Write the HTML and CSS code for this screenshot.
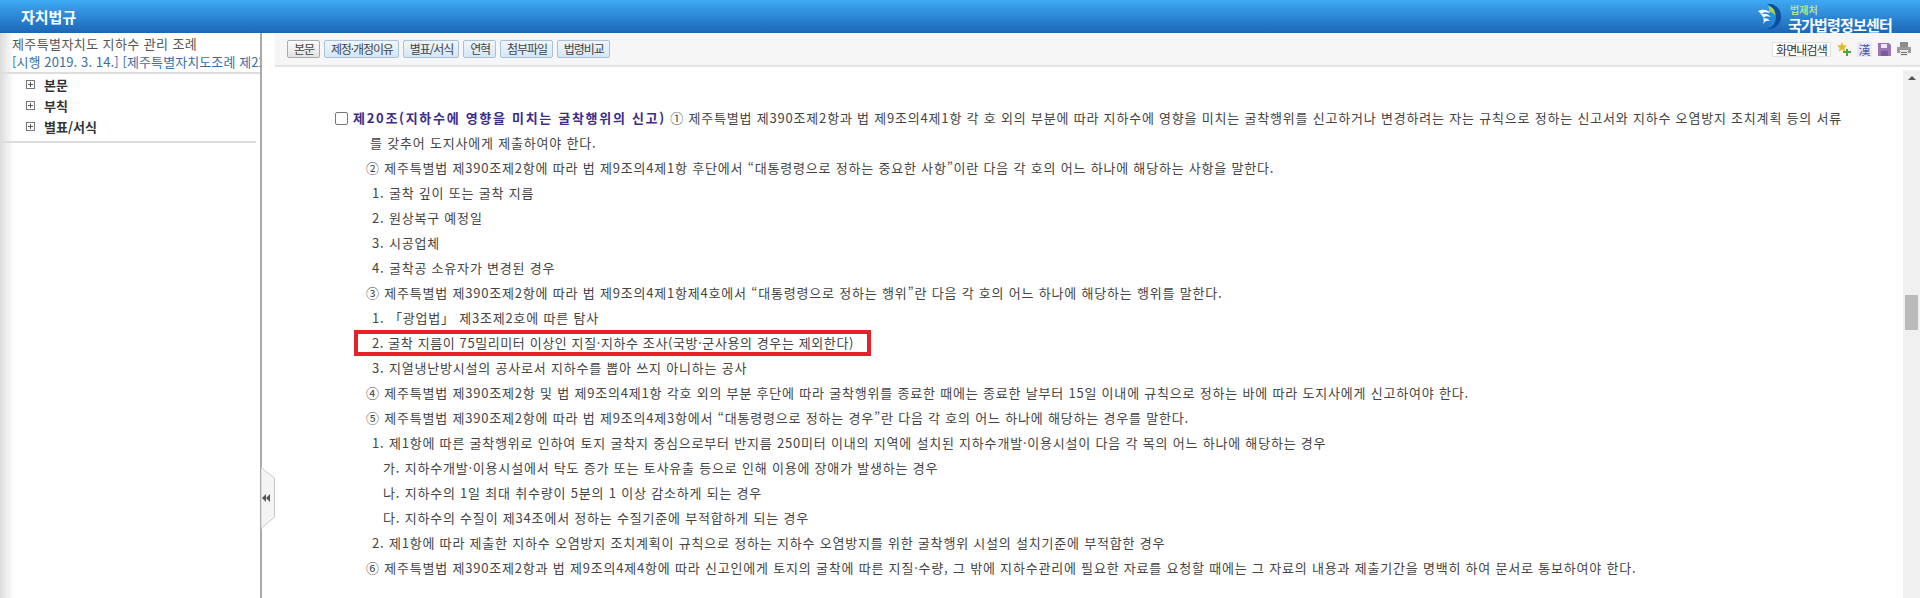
FILE: index.html
```html
<!DOCTYPE html>
<html lang="ko">
<head>
    <meta charset="UTF-8">
    <title>자치법규</title>
    <link rel="stylesheet" href="styles.css">
</head>
<body>
<div class="app">
    <header class="top">
        <h1 class="top-title">자치법규</h1>
        <div class="logo">
            <svg class="logo-mark" width="23" height="26" viewBox="0 0 23 26">
                <path d="M9 0c8-1 14 5 14 12.500S17 26 9 25c6-2 9-6 9-11.500S15 3 9 0z" fill="#0d4f9c"/>
                <path d="M10 2c5 1 8 5 7 10-1-3-4-4-7-4 2-1 2-3 0-6z" fill="#a5d651"/>
                <path d="M11 8c3 0 6 2 6 5 0 5-3 9-7 11 3-3 4-6 3-9-1-3-1-5-2-7z" fill="#1f8fe0"/>
                <path d="M0 7c4-2 9-2 12 2-4-1-7-1-9 1 3-1 8 0 10 3-3-1-6-1-8 1 3 0 6 1 7 3-3-1-5 0-7 3 2-4 0-9-5-13z" fill="#fff"/>
            </svg>
            <div class="logo-text">
                <span class="logo-sub">법제처</span>
                <span class="logo-name">국가법령정보센터</span>
            </div>
        </div>
    </header>

    <div class="wrap">
        <aside class="side">
            <div class="side-head">
                <div class="side-law">제주특별자치도 지하수 관리 조례</div>
                <div class="side-date">[시행 2019. 3. 14.] [제주특별자치도조례 제2200호]</div>
            </div>
            <ul class="tree">
                <li><span class="plus"></span>본문</li>
                <li><span class="plus"></span>부칙</li>
                <li><span class="plus"></span>별표/서식</li>
            </ul>
        </aside>
        <div class="fold">
            <svg width="14" height="62" viewBox="0 0 14 62">
                <path d="M0 0.5L13.500 11V50L0 61.500z" fill="#f4f4f4" stroke="#c8c8c8"/>
                <path d="M1 31L5 27V35zM5 31L9 27V35z" fill="#555"/>
            </svg>
        </div>

        <main class="main">
            <div class="toolbar">
                <div class="btns">
                    <button class="btn btn-on">본문</button>
                    <button class="btn">제정·개정이유</button>
                    <button class="btn">별표/서식</button>
                    <button class="btn">연혁</button>
                    <button class="btn">첨부파일</button>
                    <button class="btn">법령비교</button>
                </div>
                <div class="tools">
                    <span class="find">화면내검색</span>
                    <svg class="ico" width="14" height="14" viewBox="0 0 14 14">
                        <path d="M5 0l1.500 3.200 3.500.4-2.600 2.400.7 3.500L5 7.800 1.900 9.500l.7-3.500L0 3.600l3.500-.4z" fill="#e8b828"/>
                        <path d="M9 7h2v2h3v2h-3v3H9v-3H6V9h3z" fill="#4aa83a"/>
                    </svg>
                    <span class="han">漢</span>
                    <svg class="ico" width="13" height="13" viewBox="0 0 13 13">
                        <path d="M0 0h11l2 2v11H0z" fill="#9a74b4"/>
                        <path d="M3 1h6v4H3z" fill="#efe8f4"/>
                        <path d="M3 8h7v5H3z" fill="#7d5a98"/>
                    </svg>
                    <svg class="ico ico-last" width="14" height="14" viewBox="0 0 14 14">
                        <path d="M3 0h8v5H3z" fill="#8c8c8c"/>
                        <path d="M0 5h14v6H0z" fill="#9a9a9a"/>
                        <path d="M3 8h8v6H3z" fill="#e8e8e8"/>
                        <path d="M4 10h6v1H4zM4 12h6v1H4z" fill="#777"/>
                    </svg>
                </div>
            </div>

            <div class="pane">
                <div class="doc">
                    <p class="line"><input type="checkbox" class="chk"><strong class="art">제20조(지하수에 영향을 미치는 굴착행위의 신고)</strong> ① 제주특별법 제390조제2항과 법 제9조의4제1항 각 호 외의 부분에 따라 지하수에 영향을 미치는 굴착행위를 신고하거나 변경하려는 자는 규칙으로 정하는 신고서와 지하수 오염방지 조치계획 등의 서류</p>
                    <p class="line cont">를 갖추어 도지사에게 제출하여야 한다.</p>
                    <p class="line hang">② 제주특별법 제390조제2항에 따라 법 제9조의4제1항 후단에서 “대통령령으로 정하는 중요한 사항”이란 다음 각 호의 어느 하나에 해당하는 사항을 말한다.</p>
                    <p class="line num">1. 굴착 깊이 또는 굴착 지름</p>
                    <p class="line num">2. 원상복구 예정일</p>
                    <p class="line num">3. 시공업체</p>
                    <p class="line num">4. 굴착공 소유자가 변경된 경우</p>
                    <p class="line hang">③ 제주특별법 제390조제2항에 따라 법 제9조의4제1항제4호에서 “대통령령으로 정하는 행위”란 다음 각 호의 어느 하나에 해당하는 행위를 말한다.</p>
                    <p class="line num">1. 「광업법」 제3조제2호에 따른 탐사</p>
                    <p class="line mark">2. 굴착 지름이 75밀리미터 이상인 지질·지하수 조사(국방·군사용의 경우는 제외한다)</p>
                    <p class="line num">3. 지열냉난방시설의 공사로서 지하수를 뽑아 쓰지 아니하는 공사</p>
                    <p class="line hang">④ 제주특별법 제390조제2항 및 법 제9조의4제1항 각호 외의 부분 후단에 따라 굴착행위를 종료한 때에는 종료한 날부터 15일 이내에 규칙으로 정하는 바에 따라 도지사에게 신고하여야 한다.</p>
                    <p class="line hang">⑤ 제주특별법 제390조제2항에 따라 법 제9조의4제3항에서 “대통령령으로 정하는 경우”란 다음 각 호의 어느 하나에 해당하는 경우를 말한다.</p>
                    <p class="line num">1. 제1항에 따른 굴착행위로 인하여 토지 굴착지 중심으로부터 반지름 250미터 이내의 지역에 설치된 지하수개발·이용시설이 다음 각 목의 어느 하나에 해당하는 경우</p>
                    <p class="line mok">가. 지하수개발·이용시설에서 탁도 증가 또는 토사유출 등으로 인해 이용에 장애가 발생하는 경우</p>
                    <p class="line mok">나. 지하수의 1일 최대 취수량이 5분의 1 이상 감소하게 되는 경우</p>
                    <p class="line mok">다. 지하수의 수질이 제34조에서 정하는 수질기준에 부적합하게 되는 경우</p>
                    <p class="line num">2. 제1항에 따라 제출한 지하수 오염방지 조치계획이 규칙으로 정하는 지하수 오염방지를 위한 굴착행위 시설의 설치기준에 부적합한 경우</p>
                    <p class="line hang">⑥ 제주특별법 제390조제2항과 법 제9조의4제4항에 따라 신고인에게 토지의 굴착에 따른 지질·수량, 그 밖에 지하수관리에 필요한 자료를 요청할 때에는 그 자료의 내용과 제출기간을 명백히 하여 문서로 통보하여야 한다.</p>
                </div>
                <div class="scroll">
                    <span class="scroll-up"></span>
                    <span class="scroll-thumb"></span>
                </div>
            </div>
        </main>
    </div>
</div>
</body>
</html>
```

FILE: styles.css
```css
* { box-sizing: border-box; }
html, body { margin: 0; height: 100%; overflow: hidden; }
body { font-family: "Noto Sans CJK KR", "Noto Sans", sans-serif; font-size: 13px; color: #444; background: #fff; }
.app { height: 598px; display: flex; flex-direction: column; }

.top { height: 33px; flex: none; display: flex; justify-content: space-between; background: linear-gradient(#3fa9f5, #1b66b5); color: #fff; }
.top-title { margin: 0 0 0 21px; font-size: 15px; line-height: 33px; font-weight: bold; }
.logo { display: flex; margin-right: 28px; padding-top: 4px; }
.logo-mark { margin-right: 7px; }
.logo-text { display: flex; flex-direction: column; }
.logo-sub { font-size: 10px; line-height: 12px; color: #b5e08c; font-weight: bold; padding-left: 2px; }
.logo-name { font-size: 15px; line-height: 17px; font-weight: bold; letter-spacing: -0.8px; }

.wrap { flex: 1; display: flex; min-height: 0; position: relative; }
.side { width: 262px; flex: none; border-right: 2px solid #aaa; background: linear-gradient(to right, #dcdcdc, #fff 14px); overflow: hidden; }
.side-head { height: 41px; padding: 2px 0 0 12px; border-bottom: 2px solid #ddd; line-height: 18px; white-space: nowrap; overflow: hidden; }
.side-law { color: #555; letter-spacing: 0.4px; }
.side-date { color: #3a6ea5; letter-spacing: 0.1px; }
.tree { list-style: none; margin: 0 4px 0 0; padding: 0 0 4px 26px; border-bottom: 2px solid #ddd; }
.tree li { height: 21px; line-height: 21px; display: flex; align-items: center; font-weight: bold; color: #333; }
.plus { width: 9px; height: 9px; margin-right: 9px; border: 1px solid #777; background: linear-gradient(#555, #555) center / 5px 1px no-repeat, linear-gradient(#555, #555) center / 1px 5px no-repeat; }
.fold { position: absolute; left: 261px; top: 434px; width: 14px; height: 62px; }
.fold svg { display: block; }

.main { flex: 1; min-width: 0; display: flex; flex-direction: column; padding-left: 13px; }
.toolbar { height: 33px; flex: none; display: flex; justify-content: space-between; align-items: center; padding: 0 9px 0 12px; background: #f6f6f6; border-bottom: 1px solid #ddd; box-shadow: 0 1px 1px #e8e8e8; }
.btns { display: flex; gap: 4px; }
.btn { height: 18px; padding: 0 5px 0 6px; margin: 0; font-family: inherit; font-size: 12px; line-height: 16px; letter-spacing: -1.1px; color: #444; border: 1px solid #a9c2d8; border-radius: 2px; background: linear-gradient(#f0f7fd, #d3e6f6); }
.btn-on { border-color: #aaa; background: linear-gradient(#fbfbfb, #e2e2e2); }
.tools { display: flex; align-items: center; }
.find { width: 59px; height: 15px; font-size: 12px; line-height: 14px; text-align: center; background: #fff; border: 1px solid #e0e0e0; letter-spacing: -0.8px; color: #333; margin-right: 6px; }
.ico { display: block; margin-right: 6px; }
.ico-last { margin-right: 0; }
.han { width: 15px; height: 15px; font-size: 12px; line-height: 15px; text-align: center; background: #eaeaf6; color: #4a5aa8; margin-right: 6px; }

.pane { flex: 1; min-height: 0; display: flex; margin-top: 4px; }
.doc { flex: 1; min-width: 0; padding: 35px 0 0 60px; white-space: nowrap; overflow: hidden; }
.line { margin: 0; height: 25px; line-height: 25px; letter-spacing: 0.8px; }
.chk { width: 13px; height: 13px; margin: 0 5px 0 0; vertical-align: -2px; appearance: none; border: 1px solid #777; border-radius: 2px; background: #fff; }
.art { color: #3a2c8c; letter-spacing: 1.7px; }
.cont { padding-left: 35px; }
.hang { padding-left: 31px; }
.num { padding-left: 37px; }
.mok { padding-left: 48px; }
.mark { width: 517px; height: 26px; margin: 0 0 -1px 19px; padding-left: 14px; line-height: 17px; letter-spacing: 0.6px; border: 4px solid #e8202a; }
.scroll { width: 17px; flex: none; background: #f0f0f0; display: flex; flex-direction: column; align-items: center; }
.scroll-up { margin-top: 6px; border: 4px solid transparent; border-top: 0; border-bottom: 4px solid #555; }
.scroll-thumb { width: 13px; height: 35px; margin-top: 215px; background: #bbb; }
```
